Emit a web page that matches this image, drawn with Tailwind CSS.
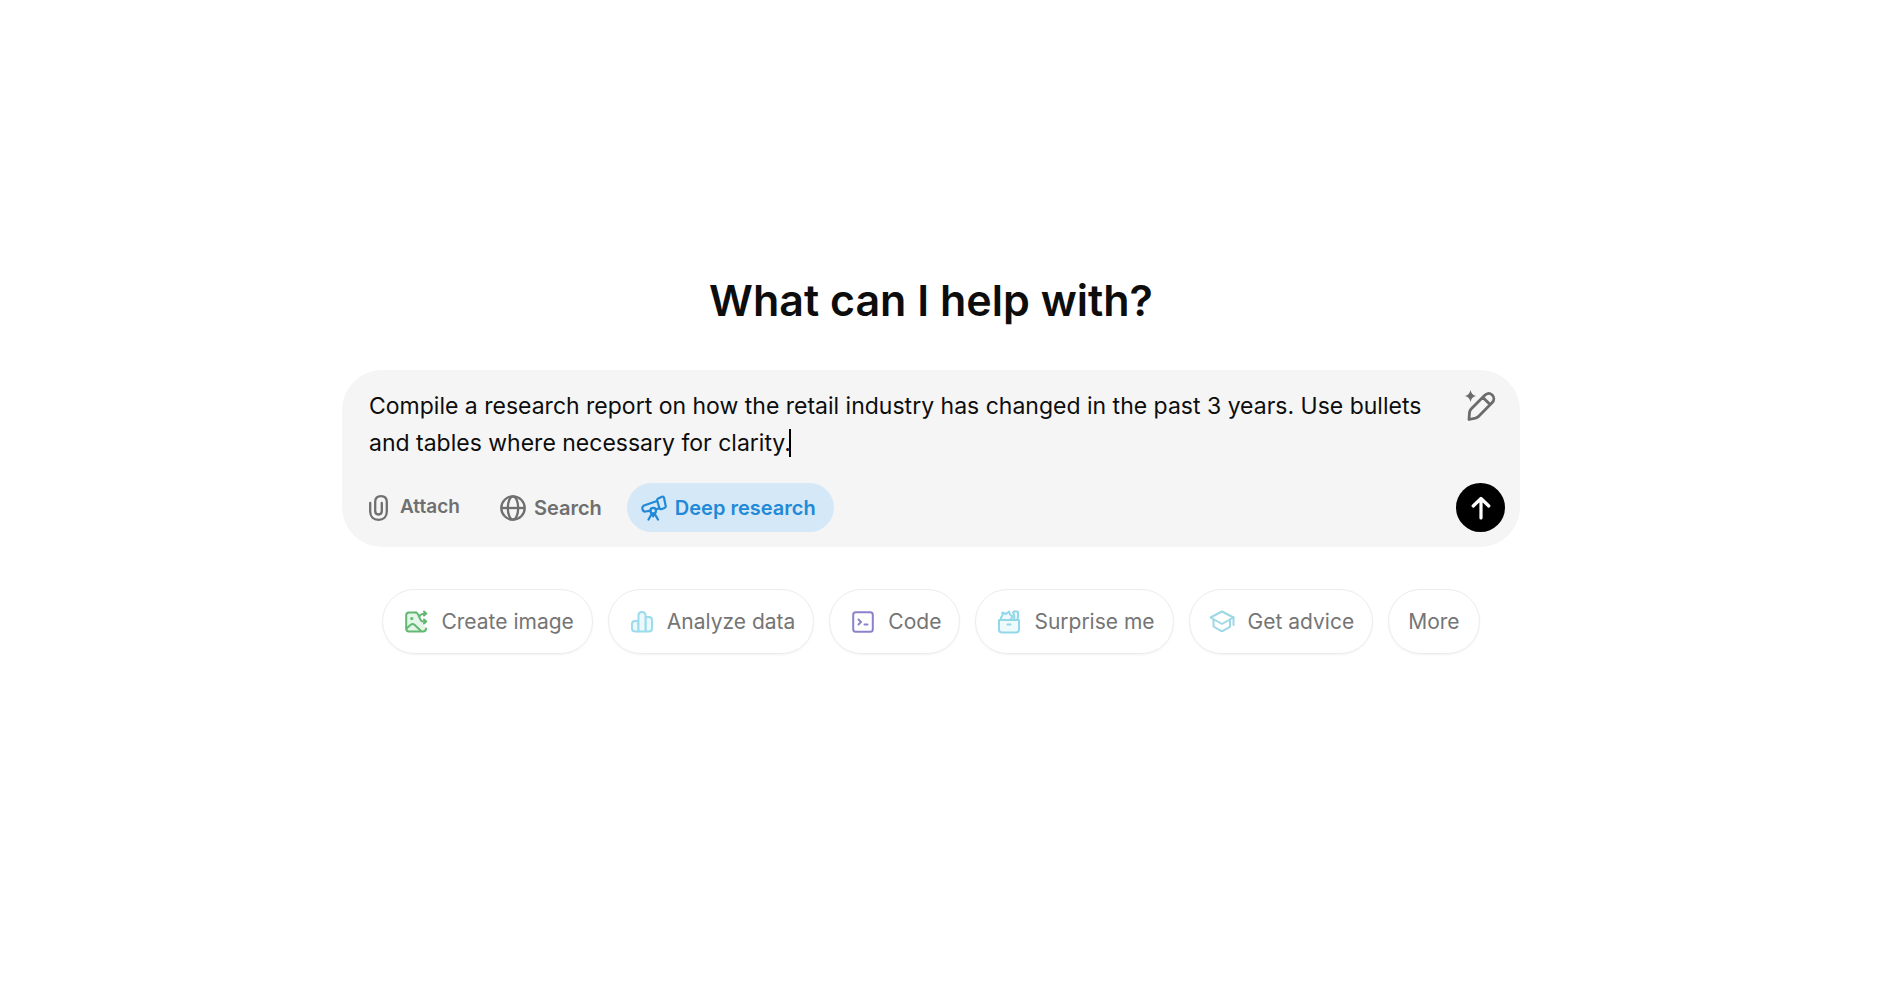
<!DOCTYPE html>
<html lang="en">
<head>
    <meta charset="UTF-8">
    <meta name="viewport" content="width=device-width, initial-scale=1.0">
    <title>What can I help with?</title>
    <script src="https://cdn.jsdelivr.net/npm/@tailwindcss/browser@4"></script>
</head>
<body class="min-h-screen bg-white font-['Inter',sans-serif] text-[#0d0d0d]">
    <main class="flex flex-col items-center pt-[268px] pr-[38px]">
        <h1 id="promptTitle" class="text-[43px] leading-[64px] font-semibold">What can I help with?</h1>

        <!-- Prompt box -->
        <form class="mt-[38px] w-full max-w-[1178px] rounded-[40px] bg-[#f5f5f5] pt-[18px] pr-[15px] pb-[15px] pl-[27px]">
            <div class="flex items-start justify-between">
                <div class="relative w-[1090px]">
                    <textarea id="prompt" rows="2" aria-labelledby="promptTitle" class="block w-full resize-none overflow-hidden bg-transparent text-[23px] leading-[37px] outline-none">Compile a research report on how the retail industry has changed in the past 3 years. Use bullets and tables where necessary for clarity.</textarea>
                    <span class="absolute top-[41px] left-[420px] h-[28px] w-[2px] bg-black"></span>
                </div>
                <button type="button" aria-label="Edit prompt" class="mt-[2px] mr-2 text-[#6b6b6b]">
                    <svg class="size-8" viewBox="0 0 32 32" fill="none" stroke="currentColor" stroke-width="2.8" stroke-linejoin="round" stroke-linecap="round">
                        <path d="M4 29.500 L4.500 22.500 Q4.700 20.500 6.100 19 L19.500 5.500 C22 3 25 3 27.200 5 C29.500 7.300 29.300 10.500 27 12.800 L14 26 Q12.500 27.600 10.500 28.200 Z M18 7.500 L25 14.500"/>
                        <path d="M5.500 0 Q6.400 5 11 6 Q6.400 7 5.500 12 Q4.600 7 0 6 Q4.600 5 5.500 0 Z" fill="currentColor" stroke="none"/>
                    </svg>
                </button>
            </div>

            <div class="mt-[21px] flex h-[49px] items-center text-[20px] font-semibold text-[#6f6f6f]">
                <button type="button" class="flex items-center gap-3">
                    <svg class="h-[26px] w-[19px]" viewBox="0 0 19 26" fill="none" stroke="currentColor" stroke-width="2.300" stroke-linecap="round">
                        <path d="M1.200 8 V16.500 C1.200 21.800 4.500 24.800 9.500 24.800 C14.500 24.800 17.800 21.800 17.800 16.500 V7 C17.800 3.400 15.500 1.200 12 1.200 C8.500 1.200 6.200 3.400 6.200 7 V16 C6.200 18.300 7.500 19.500 9.500 19.500 C11.500 19.500 12.800 18.300 12.800 16 V8"/>
                    </svg>
                    <span class="text-[19px]">Attach</span>
                </button>
                <button type="button" class="ml-10 flex items-center gap-2">
                    <svg class="size-[26px]" viewBox="0 0 26 26" fill="none" stroke="currentColor" stroke-width="2.300">
                        <circle cx="13" cy="13" r="11.700"/>
                        <ellipse cx="13" cy="13" rx="5.200" ry="11.700"/>
                        <path d="M1.300 13 H24.700"/>
                    </svg>
                    Search
                </button>
                <button type="button" class="ml-[25px] flex h-full items-center gap-2 rounded-full bg-[#d5e8f8] pr-[18px] pl-[14px] text-[#2189d6]">
                    <svg class="size-[26px]" viewBox="0 0 26 26" fill="none" stroke="currentColor" stroke-width="2.200" stroke-linejoin="round" stroke-linecap="round">
                        <path d="M17.200 3.400 L21 1.700 Q22.500 1.200 23 2.700 L24.700 11 Q25 12.500 23.500 13 L20.200 14.200 Q18.900 14.500 18.400 13.200 L16.200 5.500 Q15.900 4 17.200 3.400 Z"/>
                        <path d="M16 6 L3 10.500 Q0.900 11.600 1.400 13.700 Q2 16.800 4.500 16.500 L9.500 15.600 M15 14.200 L18.400 13.400"/>
                        <circle cx="12.200" cy="15.700" r="2.800"/>
                        <path d="M11 18.500 L7.500 24.500 M13.500 18.500 L17 24.500 M12.200 18.500 V21.500"/>
                    </svg>
                    Deep research
                </button>
                <button type="submit" aria-label="Send" class="ml-auto flex size-[49px] items-center justify-center rounded-full bg-black text-white">
                    <svg class="size-6" viewBox="0 0 24 24" fill="none" stroke="currentColor" stroke-width="3.200" stroke-linecap="round" stroke-linejoin="round">
                        <path d="M12 22 V2.500 M4.200 10 L12 2.500 L19.800 10"/>
                    </svg>
                </button>
            </div>
        </form>

        <!-- Suggestions -->
        <div class="mt-[42px] flex gap-[15px] text-[21px] text-[#757575]">
            <button type="button" class="flex h-[65px] items-center gap-[13px] rounded-full border border-[#ececec] pr-[18px] pl-[21px] shadow-xs">
                <svg class="size-6 text-[#62b873]" viewBox="0 0 24 24" fill="none" stroke="currentColor" stroke-width="2" stroke-linecap="round" stroke-linejoin="round">
                    <path d="M12 2.500 H5 Q2.200 2.500 2.200 5.500 V18.500 Q2.200 21.500 5 21.500 H19 Q22 21.500 22 18.500" fill="#e5f6e8"/>
                    <path d="M2.500 18.500 L7 14.500 Q8.800 13.200 10.500 14.800 L17 21"/>
                    <path d="M12 2.500 C15.500 3 15 11.500 19 11.500 H22 M15.500 6.500 C16.500 4 18 3.500 22 3.500 M20 1.500 L22.300 3.500 L20 5.500 M20 9.500 L22.300 11.500 L20 13.500"/>
                    <circle cx="7.800" cy="8.500" r="1.600" fill="currentColor" stroke="none"/>
                </svg>
                Create image
            </button>
            <button type="button" class="flex h-[65px] items-center gap-[13px] rounded-full border border-[#ececec] pr-[18px] pl-[21px] shadow-xs">
                <svg class="size-6 text-[#9bdcec]" viewBox="0 0 24 24" fill="#ecf9fc" stroke="currentColor" stroke-width="2" stroke-linejoin="round">
                    <path d="M8.500 21.500 H5 Q2 21.500 2 18.500 V14 Q2 11 5 11 H8.500 Z"/>
                    <path d="M15.500 7 H19 Q22 7 22 10 V18.500 Q22 21.500 19 21.500 H15.500 Z"/>
                    <path d="M8.500 21.500 V5.500 Q8.500 2 12 2 Q15.500 2 15.500 5.500 V21.500 Z"/>
                </svg>
                Analyze data
            </button>
            <button type="button" class="flex h-[65px] items-center gap-[13px] rounded-full border border-[#ececec] pr-[18px] pl-[21px] shadow-xs">
                <svg class="size-6 text-[#8a83ca]" viewBox="0 0 24 24" fill="none" stroke="currentColor" stroke-width="2" stroke-linecap="round" stroke-linejoin="round">
                    <rect x="2.200" y="2.200" width="19.600" height="19.600" rx="2.500"/>
                    <path d="M7.500 9.500 L10 12 L7.500 14.500 M13.500 14.500 H16.500"/>
                </svg>
                Code
            </button>
            <button type="button" class="flex h-[65px] items-center gap-[13px] rounded-full border border-[#ececec] pr-[18px] pl-[21px] shadow-xs">
                <svg class="size-6 text-[#93d8e8]" viewBox="0 0 24 24" fill="#eefafd" stroke="currentColor" stroke-width="2" stroke-linecap="round" stroke-linejoin="round">
                    <path d="M4 10 V7.500 Q6 6 5.500 2.500 L9 4 L12 1.500 L13 4.500 L15.500 6 L13.500 10"/>
                    <path d="M16 2.500 Q18 0.500 21 2 V7.500 L20 10 H16.500 Q18.500 6 16 2.500 Z"/>
                    <path d="M2 10 H22 V19.500 Q22 22.500 19 22.500 H5 Q2 22.500 2 19.500 Z M10.500 14.500 H13.500"/>
                </svg>
                Surprise me
            </button>
            <button type="button" class="flex h-[65px] items-center gap-[13px] rounded-full border border-[#ececec] pr-[18px] pl-[19px] shadow-xs">
                <svg class="size-[26px] text-[#9cd8e5]" viewBox="0 0 26 26" fill="none" stroke="currentColor" stroke-width="2" stroke-linecap="round" stroke-linejoin="round">
                    <path d="M1.500 8.500 L13 2.500 L24.500 8.500 L13 15 Z"/>
                    <path d="M4.500 10.500 V17.500 L12 21.800 Q13 22.400 14 21.800 L21 17.800 V10.500 M24.500 8.500 V16"/>
                </svg>
                Get advice
            </button>
            <button type="button" class="flex h-[65px] items-center rounded-full border border-[#ececec] px-[19px] shadow-xs">More</button>
        </div>
    </main>
</body>
</html>
